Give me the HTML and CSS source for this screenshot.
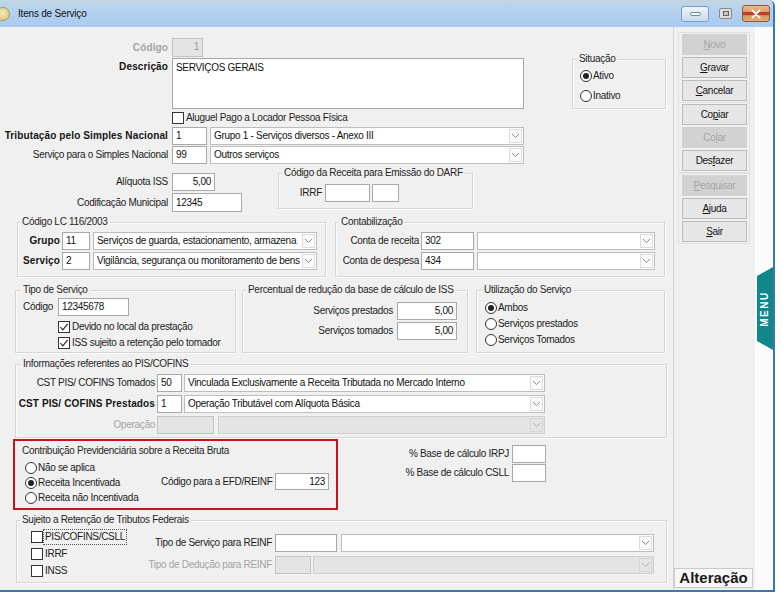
FILE: index.html
```html
<!DOCTYPE html>
<html lang="pt-BR">
<head>
<meta charset="utf-8">
<title>Itens de Serviço</title>
<link rel="stylesheet" href="styles.css">
</head>
<body>
<div class="window">
  <div class="titlebar">
    <span class="appicon"></span>
    <span class="title">Itens de Serviço</span>
    <span class="tb-min"><i></i></span>
    <span class="tb-max"><i></i></span>
    <span class="tb-close"><svg width="12" height="10" viewBox="0 0 12 10"><path d="M2.5 1.5l7 7M9.5 1.5l-7 7" stroke="#f4f4f4" stroke-width="2" stroke-linecap="round"/></svg></span>
  </div>
  <div class="client">
    <div class="main">
      <!-- section A -->
      <div class="sec-a">
        <div class="form-top">
          <div class="row r-codigo">
            <span class="lbl b dis-t">Código</span>
            <span class="inp inp-dis num w31">1</span>
          </div>
          <div class="row r-desc">
            <span class="lbl b lbl-top">Descrição</span>
            <span class="inp memo">SERVIÇOS GERAIS</span>
          </div>
          <div class="row r-alug">
            <span class="chk"></span>
            <span class="opt">Aluguel Pago a Locador Pessoa Física</span>
          </div>
          <div class="row r-trib">
            <span class="lbl b">Tributação pelo Simples Nacional</span>
            <span class="inp w35">1</span>
            <span class="sel w314 ml3"><span class="txt">Grupo 1 - Serviços diversos - Anexo III</span><span class="arr"><svg width="9" height="6" viewBox="0 0 9 6"><path d="M1 1l3.5 3.5L8 1" fill="none" stroke="#8a8a8a"/></svg></span></span>
          </div>
          <div class="row r-sn">
            <span class="lbl">Serviço para o Simples Nacional</span>
            <span class="inp w35">99</span>
            <span class="sel w314 ml3"><span class="txt">Outros serviços</span><span class="arr"><svg width="9" height="6" viewBox="0 0 9 6"><path d="M1 1l3.5 3.5L8 1" fill="none" stroke="#8a8a8a"/></svg></span></span>
          </div>
        </div>
        <div class="group g-sit">
          <span class="legend">Situação</span>
          <div class="sit-opts">
            <div class="ropt"><span class="radio on"></span><span>Ativo</span></div>
            <div class="ropt r-inativo"><span class="radio"></span><span>Inativo</span></div>
          </div>
        </div>
      </div>

      <!-- section B -->
      <div class="sec-b">
        <div class="col-b">
          <div class="row h18">
            <span class="lbl">Alíquota ISS</span>
            <span class="inp num w43">5,00</span>
          </div>
          <div class="row h19 mt2">
            <span class="lbl">Codificação Municipal</span>
            <span class="inp w70 h19">12345</span>
          </div>
        </div>
        <div class="group g-darf">
          <span class="legend">Código da Receita para Emissão do DARF</span>
          <div class="row darf-row">
            <span class="lbl-irrf">IRRF</span>
            <span class="inp w45"></span>
            <span class="inp w27 ml2"></span>
          </div>
        </div>
      </div>

      <!-- section C -->
      <div class="sec-c">
        <div class="group g-lc">
          <span class="legend">Código LC 116/2003</span>
          <div class="rows-lc">
            <div class="row h18">
              <span class="lbl-lc b">Grupo</span>
              <span class="inp w28">11</span>
              <span class="sel w224 ml3"><span class="txt">Serviços de guarda, estacionamento, armazena</span><span class="arr"><svg width="9" height="6" viewBox="0 0 9 6"><path d="M1 1l3.5 3.5L8 1" fill="none" stroke="#8a8a8a"/></svg></span></span>
            </div>
            <div class="row h18 mt2">
              <span class="lbl-lc b">Serviço</span>
              <span class="inp w28">2</span>
              <span class="sel w224 ml3"><span class="txt">Vigilância, segurança ou monitoramento de bens</span><span class="arr"><svg width="9" height="6" viewBox="0 0 9 6"><path d="M1 1l3.5 3.5L8 1" fill="none" stroke="#8a8a8a"/></svg></span></span>
            </div>
          </div>
        </div>
        <div class="group g-contab">
          <span class="legend">Contabilização</span>
          <div class="rows-lc">
            <div class="row h18">
              <span class="lbl-ct">Conta de receita</span>
              <span class="inp w53">302</span>
              <span class="sel w178 ml3"><span class="txt"></span><span class="arr"><svg width="9" height="6" viewBox="0 0 9 6"><path d="M1 1l3.5 3.5L8 1" fill="none" stroke="#8a8a8a"/></svg></span></span>
            </div>
            <div class="row h18 mt2">
              <span class="lbl-ct">Conta de despesa</span>
              <span class="inp w53">434</span>
              <span class="sel w178 ml3"><span class="txt"></span><span class="arr"><svg width="9" height="6" viewBox="0 0 9 6"><path d="M1 1l3.5 3.5L8 1" fill="none" stroke="#8a8a8a"/></svg></span></span>
            </div>
          </div>
        </div>
      </div>

      <!-- section D -->
      <div class="sec-d">
        <div class="group g-tipo">
          <span class="legend">Tipo de Serviço</span>
          <div class="row h18 tipo-cod">
            <span class="lbl-tc">Código</span>
            <span class="inp w71">12345678</span>
          </div>
          <div class="cb-rows">
            <div class="cbrow"><span class="chk on"><svg width="10" height="10" viewBox="0 0 10 10"><path d="M1.5 5.2l2.4 2.6L8.6 1.8" fill="none" stroke="#222" stroke-width="1.1"/></svg></span><span class="opt">Devido no local da prestação</span></div>
            <div class="cbrow"><span class="chk on"><svg width="10" height="10" viewBox="0 0 10 10"><path d="M1.5 5.2l2.4 2.6L8.6 1.8" fill="none" stroke="#222" stroke-width="1.1"/></svg></span><span class="opt">ISS sujeito a retenção pelo tomador</span></div>
          </div>
        </div>
        <div class="group g-perc">
          <span class="legend">Percentual de redução da base de cálculo de ISS</span>
          <div class="rows-perc">
            <div class="row h18">
              <span class="lbl-pc">Serviços prestados</span>
              <span class="inp num w60">5,00</span>
            </div>
            <div class="row h18 mt2">
              <span class="lbl-pc">Serviços tomados</span>
              <span class="inp num w60">5,00</span>
            </div>
          </div>
        </div>
        <div class="group g-util">
          <span class="legend">Utilização do Serviço</span>
          <div class="util-opts">
            <div class="ropt r16"><span class="radio on"></span><span>Ambos</span></div>
            <div class="ropt r16"><span class="radio"></span><span>Serviços prestados</span></div>
            <div class="ropt r16"><span class="radio"></span><span>Serviços Tomados</span></div>
          </div>
        </div>
      </div>

      <!-- section E -->
      <div class="group g-pis">
        <span class="legend">Informações referentes ao PIS/COFINS</span>
        <div class="rows-pis">
          <div class="row h18">
            <span class="lbl-pis">CST PIS/ COFINS Tomados</span>
            <span class="inp w25">50</span>
            <span class="sel w361 ml2"><span class="txt">Vinculada Exclusivamente a Receita Tributada no Mercado Interno</span><span class="arr"><svg width="9" height="6" viewBox="0 0 9 6"><path d="M1 1l3.5 3.5L8 1" fill="none" stroke="#8a8a8a"/></svg></span></span>
          </div>
          <div class="row h18 mt3">
            <span class="lbl-pis b">CST PIS/ COFINS Prestados</span>
            <span class="inp w25">1</span>
            <span class="sel w361 ml2"><span class="txt">Operação Tributável com Alíquota Básica</span><span class="arr"><svg width="9" height="6" viewBox="0 0 9 6"><path d="M1 1l3.5 3.5L8 1" fill="none" stroke="#8a8a8a"/></svg></span></span>
          </div>
          <div class="row h18 mt3">
            <span class="lbl-pis dis-t">Operação</span>
            <span class="inp inp-dis w57"></span>
            <span class="sel dis w327 ml4"><span class="txt"></span><span class="arr"><svg width="9" height="6" viewBox="0 0 9 6"><path d="M1 1l3.5 3.5L8 1" fill="none" stroke="#b0b0b0"/></svg></span></span>
          </div>
        </div>
      </div>

      <!-- section F -->
      <div class="sec-f">
        <div class="redbox">
          <div class="red-legend">Contribuição Previdenciária sobre a Receita Bruta</div>
          <div class="red-body">
            <div class="red-radios">
              <div class="ropt r15"><span class="radio"></span><span>Não se aplica</span></div>
              <div class="ropt r15"><span class="radio on"></span><span>Receita Incentivada</span></div>
              <div class="ropt r15"><span class="radio"></span><span>Receita não Incentivada</span></div>
            </div>
            <div class="row efd">
              <span class="lbl-efd">Código para a EFD/REINF</span>
              <span class="inp num w54 h17">123</span>
            </div>
          </div>
        </div>
        <div class="irpj">
          <div class="row h18 irpj-row">
            <span class="lbl-ir">% Base de cálculo IRPJ</span>
            <span class="inp w34"></span>
          </div>
          <div class="row h18 mt1 irpj-row">
            <span class="lbl-ir">% Base de cálculo CSLL</span>
            <span class="inp w34"></span>
          </div>
        </div>
      </div>

      <!-- section G -->
      <div class="group g-suj">
        <span class="legend">Sujeito a Retenção de Tributos Federais</span>
        <div class="suj-body">
          <div class="suj-checks">
            <div class="cbrow r17"><span class="chk"></span><span class="opt focus">PIS/COFINS/CSLL</span></div>
            <div class="cbrow r17"><span class="chk"></span><span class="opt">IRRF</span></div>
            <div class="cbrow r17"><span class="chk"></span><span class="opt">INSS</span></div>
          </div>
          <div class="suj-fields">
            <div class="row h18">
              <span class="lbl-rf">Tipo de Serviço para REINF</span>
              <span class="inp w62"></span>
              <span class="sel w313 ml4"><span class="txt"></span><span class="arr"><svg width="9" height="6" viewBox="0 0 9 6"><path d="M1 1l3.5 3.5L8 1" fill="none" stroke="#8a8a8a"/></svg></span></span>
            </div>
            <div class="row h18 mt4">
              <span class="lbl-rf dis-t">Tipo de Dedução para REINF</span>
              <span class="inp inp-dis w36"></span>
              <span class="sel dis w341 ml2"><span class="txt"></span><span class="arr"><svg width="9" height="6" viewBox="0 0 9 6"><path d="M1 1l3.5 3.5L8 1" fill="none" stroke="#b0b0b0"/></svg></span></span>
            </div>
          </div>
        </div>
      </div>
    </div>

    <div class="side">
      <div class="btn-group">
        <span class="btn dis"><u>N</u>ovo</span>
        <span class="btn"><u>G</u>ravar</span>
        <span class="btn"><u>C</u>ancelar</span>
      </div>
      <div class="btn-group bg2">
        <span class="btn">Co<u>p</u>iar</span>
        <span class="btn dis">Co<u>l</u>ar</span>
        <span class="btn">Des<u>f</u>azer</span>
      </div>
      <div class="btn-group bg3">
        <span class="btn dis"><u>P</u>esquisar</span>
        <span class="btn"><u>A</u>juda</span>
        <span class="btn"><u>S</u>air</span>
      </div>
      <div class="status">Alteração</div>
    </div>

    <div class="strip">
      <div class="menutab"><span>MENU</span></div>
    </div>
  </div>
</div>
</body>
</html>
```

FILE: styles.css
```css
* { box-sizing: border-box; margin: 0; padding: 0; }
html, body { width: 782px; height: 596px; overflow: hidden; background: #fff; }
body {
  font-family: "Liberation Sans", Arial, sans-serif;
  font-size: 10px;
  line-height: 12px;
  color: #1c1c1c;
  letter-spacing: -0.3px;
}

.window {
  width: 775px;
  height: 592px;
  display: flex;
  flex-direction: column;
  border-right: 2px solid #3a78b4;
  border-bottom: 2px solid #3a78b4;
  border-top-right-radius: 6px;
  overflow: hidden;
  background: #f0f0f0;
}

/* title bar */
.titlebar {
  height: 27px;
  flex: none;
  display: flex;
  align-items: center;
  background: linear-gradient(#c4d5e1 0, #b7d3ef 8px, #a9cbee 100%);
}
.appicon {
  width: 14px; height: 14px;
  margin-left: -4px;
  border-radius: 50%;
  background: radial-gradient(circle at 45% 40%, #f4e9b6, #d3c07c);
  border: 1px solid #a29866;
}
.title { margin-left: 8px; color: #111; letter-spacing: -0.2px; }
.tb-min {
  margin-left: auto;
  width: 28px; height: 16px;
  border: 1px solid #7c9ec3;
  border-radius: 3px;
  background: linear-gradient(#eef4fb, #c9dbf0);
  display: flex; align-items: center; justify-content: center;
}
.tb-min i { width: 11px; height: 4px; border: 1px solid #6f8aa8; border-radius: 2px; background: #fff; }
.tb-max {
  margin-left: 10px;
  width: 13px; height: 11px;
  border: 1px solid #8a8a8a;
  border-radius: 2px;
  background: #dedede;
  display: flex; align-items: center; justify-content: center;
}
.tb-max i { width: 6px; height: 5px; border: 1px solid #666; background: #c6c6c6; }
.tb-close {
  margin-left: 10px; margin-right: 3px;
  width: 28px; height: 17px;
  border: 1px solid #8e5a38;
  border-radius: 3px;
  background: linear-gradient(#eabd89 0, #dca068 38%, #c33b2b 42%, #c33b2b 60%, #d69a62 64%, #e2ae77 100%);
  display: flex; align-items: center; justify-content: center;
}

.client { flex: 1; display: flex; min-height: 0; }
.main { width: 673px; flex: none; }

/* generic controls */
.row { display: flex; align-items: center; }
.h17 { height: 17px; }
.h18 { height: 18px; }
.h19 { height: 19px; }
.mt1 { margin-top: 1px; }
.mt2 { margin-top: 2px; }
.mt3 { margin-top: 3px; }
.mt4 { margin-top: 4px; }
.ml2 { margin-left: 2px; }
.ml3 { margin-left: 3px; }
.ml4 { margin-left: 4px; }
.b { font-weight: bold; letter-spacing: 0.12px; color: #151515; }
.dis-t { color: #a3a3a3; }

.lbl { width: 168px; flex: none; margin-right: 4px; text-align: right; white-space: nowrap; }
.lbl-top { align-self: flex-start; padding-top: 3px; }

.inp {
  display: block;
  flex: none;
  height: 18px;
  border: 1px solid #a8a8a8;
  background: #fff;
  padding: 0 3px;
  line-height: 16px;
  white-space: nowrap;
  overflow: hidden;
  color: #111;
}
.inp.h17 { height: 17px; line-height: 15px; }
.inp.h19 { height: 19px; line-height: 17px; }
.inp-dis { background: #e4e4e4; border-color: #c4c4c4; color: #9a9a9a; }
.num { text-align: right; }
.memo { width: 352px; height: 51px; padding: 3px 3px; line-height: 12px; }

.sel {
  display: flex;
  flex: none;
  height: 18px;
  border: 1px solid #bdbdbd;
  background: #fff;
}
.sel .txt { flex: 1; padding: 0 3px; line-height: 16px; white-space: nowrap; overflow: hidden; color: #111; }
.sel .arr {
  width: 13px; flex: none;
  margin: 1px;
  border: 1px solid #dcdcdc;
  background: #fafafa;
  display: flex; align-items: center; justify-content: center;
}
.sel.dis { background: #e4e4e4; border-color: #d0d0d0; }
.sel.dis .arr { background: #e4e4e4; border-color: #d6d6d6; }

.w25 { width: 25px; } .w27 { width: 27px; } .w28 { width: 28px; } .w31 { width: 31px; height: 19px; }
.w34 { width: 34px; } .w35 { width: 35px; } .w36 { width: 36px; } .w43 { width: 43px; }
.w45 { width: 45px; } .w53 { width: 53px; } .w54 { width: 54px; } .w57 { width: 57px; }
.w60 { width: 60px; } .w62 { width: 62px; } .w70 { width: 70px; } .w71 { width: 71px; }
.w178 { width: 178px; } .w224 { width: 224px; } .w313 { width: 313px; } .w314 { width: 314px; }
.w327 { width: 327px; } .w341 { width: 341px; } .w361 { width: 361px; }

.chk {
  width: 12px; height: 12px; flex: none;
  border: 1px solid #333;
  background: #fff;
  display: flex; align-items: center; justify-content: center;
}
.radio {
  width: 12px; height: 12px; flex: none;
  border: 1px solid #333;
  border-radius: 50%;
  background: #fff;
  display: flex; align-items: center; justify-content: center;
}
.radio.on::after { content: ""; width: 6px; height: 6px; border-radius: 50%; background: #222; }
.ropt { display: flex; align-items: center; gap: 1px; white-space: nowrap; }
.opt { margin-left: 2px; white-space: nowrap; }
.cbrow { display: flex; align-items: center; height: 16px; }
.r15 { height: 15px; }
.r16 { height: 16px; }
.r17 { height: 17px; }

/* group boxes */
.group {
  flex: none;
  border: 1px solid #d6d6d6;
  box-shadow: inset 1px 1px 0 #fbfbfb, 1px 1px 0 #fbfbfb;
}
.legend {
  display: table;
  margin-top: -7px;
  padding: 0 2px;
  background: #f0f0f0;
  line-height: 12px;
  color: #262626;
  white-space: nowrap;
}

/* section A */
.sec-a { display: flex; height: 137px; }
.form-top { width: 530px; padding-top: 11px; }
.r-codigo { height: 19px; }
.r-desc { margin-top: 1px; height: 51px; align-items: flex-start; }
.r-alug { margin-top: 3px; height: 12px; padding-left: 172px; }
.r-alug .opt { margin-left: 2px; }
.r-trib { margin-top: 3px; height: 18px; }
.r-sn { margin-top: 1px; height: 18px; }
.g-sit { margin-left: 42px; margin-top: 32px; width: 94px; height: 50px; }
.g-sit .legend { margin-left: 4px; }
.sit-opts { padding-left: 7px; margin-top: 5px; }
.r-inativo { margin-top: 8px; }

/* section B */
.sec-b { display: flex; margin-top: 9px; }
.col-b { width: 278px; flex: none; }
.g-darf { width: 195px; height: 36px; }
.g-darf .legend { margin-left: 3px; }
.darf-row { margin-top: 5px; height: 18px; }
.lbl-irrf { width: 43px; margin-right: 3px; text-align: right; }

/* section C */
.sec-c { display: flex; margin-top: 10px; }
.g-lc { margin-left: 17px; width: 309px; height: 55px; }
.g-lc .legend { margin-left: 2px; }
.rows-lc { margin-top: 4px; }
.lbl-lc { width: 42px; margin-right: 2px; text-align: right; }
.g-contab { margin-left: 9px; width: 330px; height: 55px; }
.g-contab .legend { margin-left: 3px; }
.lbl-ct { width: 83px; margin-right: 2px; text-align: right; white-space: nowrap; }

/* section D */
.sec-d { display: flex; margin-top: 13px; }
.g-tipo { margin-left: 15px; width: 221px; height: 63px; }
.g-tipo .legend { margin-left: 5px; }
.tipo-cod { margin-top: 2px; }
.lbl-tc { width: 42px; padding-right: 5px; text-align: right; }
.cb-rows { margin-top: 3px; padding-left: 42px; }
.g-perc { margin-left: 6px; width: 226px; height: 63px; }
.g-perc .legend { margin-left: 3px; }
.rows-perc { margin-top: 6px; }
.lbl-pc { width: 150px; margin-right: 4px; text-align: right; }
.g-util { margin-left: 8px; width: 189px; height: 63px; }
.g-util .legend { margin-left: 5px; }
.util-opts { margin-top: 4px; padding-left: 8px; }

/* section E */
.g-pis { margin-top: 11px; margin-left: 15px; width: 652px; height: 74px; }
.g-pis .legend { margin-left: 5px; }
.rows-pis { margin-top: 4px; }
.lbl-pis { width: 139px; margin-right: 2px; text-align: right; white-space: nowrap; }

/* section F */
.sec-f { display: flex; margin-top: 1px; height: 71px; }
.redbox { margin-left: 13px; width: 325px; height: 71px; border: 2px solid #c5141c; flex: none; }
.red-legend { margin-top: 4px; padding-left: 7px; color: #262626; white-space: nowrap; }
.red-body { display: flex; margin-top: 3px; }
.red-radios { width: 146px; padding-left: 10px; flex: none; }
.efd { margin-top: 13px; height: 17px; align-self: flex-start; }
.lbl-efd { width: 110px; margin-right: 4px; text-align: right; white-space: nowrap; }
.irpj { width: 208px; flex: none; padding-top: 6px; }
.irpj-row { justify-content: flex-end; }
.lbl-ir { margin-right: 3px; white-space: nowrap; }

/* section G */
.g-suj { margin-top: 10px; margin-left: 16px; width: 651px; height: 63px; }
.g-suj .legend { margin-left: 3px; }
.suj-body { display: flex; margin-top: 2px; }
.suj-checks { width: 120px; flex: none; padding-left: 14px; }
.suj-checks .cbrow { height: 17px; }
.focus { outline: 1px dotted #555; outline-offset: 1px; }
.suj-fields { margin-top: 6px; }
.lbl-rf { width: 135px; margin-right: 3px; text-align: right; white-space: nowrap; }

/* side panel */
.side {
  width: 82px; flex: none;
  border-left: 1px solid #d3d3d3;
  display: flex; flex-direction: column;
  padding: 5px 0 2px 4px;
}
.btn-group {
  width: 72px;
  border: 1px solid #e1e1e1;
  padding: 1px 2px 1px 3px;
  display: flex; flex-direction: column; gap: 2px;
}
.bg2 { margin-top: -1px; }
.btn {
  display: block;
  height: 21px;
  border: 1px solid #bcbcbc;
  background: #e6e6e6;
  text-align: center;
  line-height: 19px;
  color: #151515;
}
.btn.dis { background: #d2d2d2; border-color: #d2d2d2; color: #a6a6a6; }
.status {
  margin-top: auto;
  margin-left: -4px;
  width: 79px; height: 20px;
  border: 1px solid #c9c9c9;
  background: #f8f8f8;
  font-weight: bold;
  font-size: 15px;
  line-height: 18px;
  letter-spacing: 0;
  text-align: center;
  color: #1a1a1a;
  white-space: nowrap;
}

/* right strip + menu tab */
.strip { width: 18px; flex: none; background: #fbfbfb; padding-top: 240px; }
.menutab {
  margin-left: 2px;
  width: 16px; height: 83px;
  background: #10878b;
  clip-path: polygon(0 9px, 100% 0, 100% 100%, 0 74px);
  display: flex; align-items: center; justify-content: center;
}
.menutab span {
  transform: rotate(-90deg);
  color: #fff;
  font-weight: bold;
  font-size: 10px;
  letter-spacing: 1.5px;
  white-space: nowrap;
}
```
